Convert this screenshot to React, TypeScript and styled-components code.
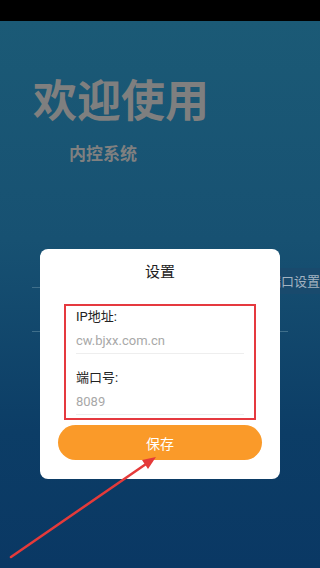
import React from "react";
import styled, { createGlobalStyle } from "styled-components";

const Global = createGlobalStyle`
  html, body { margin: 0; padding: 0; }
  body { font-family: Roboto, "Noto Sans CJK SC", sans-serif; }
  * { box-sizing: border-box; }
`;

const Page = styled.div`
  position: relative;
  width: 320px;
  height: 568px;
  overflow: hidden;
  display: flex;
  flex-direction: column;
  background: #000;
`;

const StatusBar = styled.div`
  height: 21px;
  flex: none;
  background: #000;
`;

const Screen = styled.div`
  flex: 1;
  display: flex;
  flex-direction: column;
  background: linear-gradient(180deg, #1b5a76 0%, #175172 40%, #0c3d66 75%, #0a3864 100%);
`;

const Hero = styled.div`
  padding: 55px 0 0 33px;
  display: flex;
  flex-direction: column;
`;

const HeroTitle = styled.h1`
  margin: 0;
  font-family: "Noto Sans CJK SC", sans-serif;
  font-size: 44px;
  line-height: 44px;
  font-weight: 700;
  color: #7f7f7f;
  letter-spacing: 0;
`;

const HeroSub = styled.div`
  margin: 23px 0 0 36px;
  font-family: "Noto Sans CJK SC", sans-serif;
  font-size: 17px;
  line-height: 20px;
  font-weight: 700;
  color: #808080;
`;

const BgForm = styled.div`
  margin-top: 85px;
  display: flex;
  flex-direction: column;
`;

const BgRow = styled.div<{ h: number }>`
  position: relative;
  display: flex;
  align-items: flex-end;
  justify-content: flex-end;
  height: ${(p) => p.h}px;
  margin: 0 0 0 32px;
`;

const BgLine = styled.div`
  position: absolute;
  left: 0;
  width: 256px;
  bottom: 0;
  height: 1px;
  background: #3f6f8b;
`;

const PortButton = styled.div`
  position: relative;
  width: 56px;
  height: 26px;
  margin-bottom: -6px;
  background: #194a6d;
  color: #a3b3c1;
  font-family: "Noto Sans CJK SC", sans-serif;
  font-size: 13px;
  line-height: 26px;
  padding-left: 4px;
  white-space: nowrap;
`;

const Modal = styled.div`
  position: absolute;
  left: 40px;
  top: 249px;
  width: 240px;
  height: 230px;
  background: #fff;
  border-radius: 8px;
  display: flex;
  flex-direction: column;
  align-items: center;
  padding-top: 12px;
`;

const ModalTitle = styled.div`
  font-family: "Noto Sans CJK SC", sans-serif;
  font-size: 15px;
  line-height: 20px;
  color: #222;
`;

const Highlight = styled.div`
  margin-top: 23px;
  width: 192px;
  height: 116px;
  border: 2px solid #e5393f;
  padding: 1px 10px 0 10px;
  display: flex;
  flex-direction: column;
  gap: 14px;
`;

const Field = styled.div`
  display: flex;
  flex-direction: column;
`;

const Label = styled.div`
  font-family: Roboto, "Noto Sans CJK SC", sans-serif;
  font-size: 13px;
  line-height: 20px;
  color: #222;
`;

const Input = styled.input`
  height: 27px;
  border: none;
  border-bottom: 1px solid #eeeeee;
  padding: 0;
  outline: none;
  background: transparent;
  font-family: Roboto, "Noto Sans CJK SC", sans-serif;
  font-size: 13px;
  color: #333;
  &::placeholder { color: #a8a8a8; }
`;

const SaveButton = styled.button`
  margin-top: 5px;
  width: 204px;
  height: 35px;
  border: none;
  border-radius: 18px;
  background: #fa9a29;
  color: #fff;
  font-family: "Noto Sans CJK SC", sans-serif;
  font-size: 14px;
  cursor: pointer;
`;

const Arrow = styled.svg`
  position: absolute;
  left: 0;
  top: 0;
  pointer-events: none;
`;

export default function App() {
  return (
    <>
      <Global />
      <Page>
        <StatusBar />
        <Screen>
          <Hero>
            <HeroTitle>欢迎使用</HeroTitle>
            <HeroSub>内控系统</HeroSub>
          </Hero>
          <BgForm>
            <BgRow h={40}>
              <BgLine />
              <PortButton>端口设置</PortButton>
            </BgRow>
            <BgRow h={44}>
              <BgLine />
            </BgRow>
          </BgForm>
        </Screen>
        <Modal>
          <ModalTitle>设置</ModalTitle>
          <Highlight>
            <Field>
              <Label>IP地址:</Label>
              <Input readOnly placeholder="cw.bjxx.com.cn" />
            </Field>
            <Field>
              <Label>端口号:</Label>
              <Input readOnly placeholder="8089" />
            </Field>
          </Highlight>
          <SaveButton>保存</SaveButton>
        </Modal>
        <Arrow width="320" height="568" viewBox="0 0 320 568">
          <line x1="11" y1="557" x2="146" y2="464" stroke="#e53a3a" strokeWidth="2.5" strokeLinecap="round" />
          <polygon points="156,457 142,460 148,469" fill="#e53a3a" />
        </Arrow>
      </Page>
    </>
  );
}
